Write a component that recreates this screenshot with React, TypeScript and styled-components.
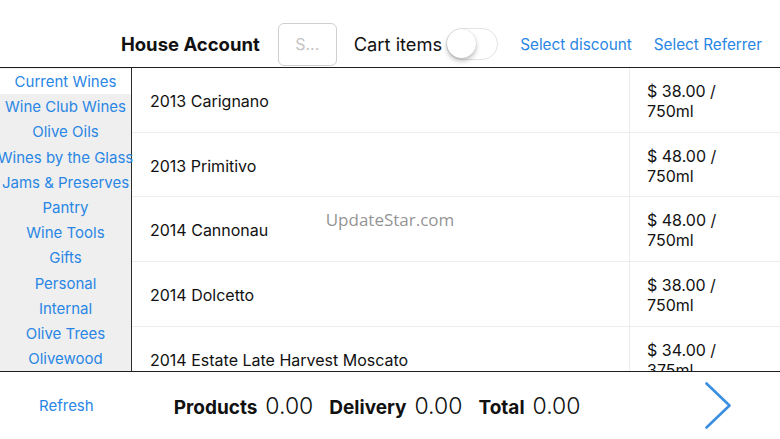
import React from 'react'
import styled, { createGlobalStyle } from 'styled-components'

const GlobalStyle = createGlobalStyle`
  html, body {
    margin: 0;
    padding: 0;
    background: #fff;
    font-family: Inter, 'Liberation Sans', Arial, sans-serif;
    color: #111;
  }
`

const BLUE = '#2a86e4'

const Screen = styled.div`
  position: relative;
  width: 780px;
  height: 439px;
  display: flex;
  flex-direction: column;
  overflow: hidden;
`

const Header = styled.header`
  height: 68px;
  box-sizing: border-box;
  border-bottom: 1px solid #1e1e1e;
  display: flex;
  align-items: center;
  justify-content: flex-end;
  padding: 21px 18px 0 0;
  flex-shrink: 0;
`

const AccountName = styled.div`
  font-size: 18.5px;
  font-weight: 700;
  margin-right: 18px;
`

const SearchBox = styled.div`
  width: 59px;
  height: 43px;
  box-sizing: border-box;
  border: 1px solid #cfcfcf;
  border-radius: 6px;
  display: flex;
  align-items: center;
  justify-content: center;
  color: #c4c4c4;
  font-size: 16px;
  margin-right: 17px;
`

const CartLabel = styled.div`
  font-size: 18.3px;
  margin-right: 4px;
`

const Toggle = styled.div`
  position: relative;
  width: 52px;
  height: 32px;
  box-sizing: border-box;
  border: 1.5px solid #e4e4e4;
  border-radius: 16px;
  background: #fff;
  margin-right: 22px;
`

const Knob = styled.div`
  position: absolute;
  left: 0;
  top: 0;
  width: 29px;
  height: 29px;
  border-radius: 50%;
  background: #fff;
  box-shadow: 0 3px 5px rgba(0, 0, 0, 0.25), 0 0 1px rgba(0, 0, 0, 0.2);
`

const LinkButton = styled.div<{ $gap?: number }>`
  color: ${BLUE};
  font-size: 15.3px;
  margin-right: ${p => p.$gap ?? 0}px;
`

const Main = styled.div`
  display: flex;
  height: 304px;
  border-bottom: 1px solid #1e1e1e;
  box-sizing: border-box;
  flex-shrink: 0;
  overflow: hidden;
`

const Sidebar = styled.nav`
  position: relative;
  z-index: 1;
  width: 132px;
  box-sizing: border-box;
  border-right: 1px solid #2a2a2a;
  background: #efefef;
  flex-shrink: 0;
  padding-top: 1px;
`

const Category = styled.div<{ $active?: boolean }>`
  height: 25.2px;
  line-height: 25.2px;
  white-space: nowrap;
  font-size: 15px;
  color: ${BLUE};
  background: ${p => (p.$active ? '#fff' : 'transparent')};
  display: flex;
  justify-content: center;
`

const Table = styled.div`
  flex: 1;
  display: flex;
  flex-direction: column;
`

const Row = styled.div`
  height: 64.7px;
  flex-shrink: 0;
  display: grid;
  grid-template-columns: 497px 1fr;
  border-bottom: 1px solid #ececec;
  box-sizing: border-box;
`

const NameCell = styled.div`
  display: flex;
  align-items: center;
  padding: 2px 0 0 18px;
  font-size: 16px;
`

const PriceCell = styled.div`
  border-left: 1px solid #ececec;
  display: flex;
  flex-direction: column;
  justify-content: center;
  padding: 2px 0 0 17px;
  font-size: 16px;
  line-height: 20px;
`

const Footer = styled.footer`
  flex: 1;
  display: flex;
  align-items: center;
  padding: 0 48px 0 39px;
`

const Refresh = styled.div`
  color: ${BLUE};
  font-size: 15px;
  margin-right: 80px;
`

const Summary = styled.div`
  display: flex;
  align-items: baseline;
  margin-right: 16px;
`

const SummaryLabel = styled.span`
  font-size: 19px;
  font-weight: 700;
  margin-right: 8px;
`

const SummaryValue = styled.span`
  font-weight: 300;
  font-size: 23px;
`

const NextButton = styled.div`
  margin-left: auto;
  display: flex;
`

const Watermark = styled.div`
  position: absolute;
  left: 0;
  right: 0;
  top: 208px;
  text-align: center;
  font-family: 'Open Sans', sans-serif;
  font-size: 17px;
  color: rgba(110, 110, 110, 0.75);
  pointer-events: none;
  z-index: 2;
`

const categories = [
  'Current Wines',
  'Wine Club Wines',
  'Olive Oils',
  'Wines by the Glass',
  'Jams & Preserves',
  'Pantry',
  'Wine Tools',
  'Gifts',
  'Personal',
  'Internal',
  'Olive Trees',
  'Olivewood',
]

const products = [
  { name: '2013 Carignano', price: '$ 38.00 /', size: '750ml' },
  { name: '2013 Primitivo', price: '$ 48.00 /', size: '750ml' },
  { name: '2014 Cannonau', price: '$ 48.00 /', size: '750ml' },
  { name: '2014 Dolcetto', price: '$ 38.00 /', size: '750ml' },
  { name: '2014 Estate Late Harvest Moscato', price: '$ 34.00 /', size: '375ml' },
]

export default function App() {
  return (
    <Screen>
      <GlobalStyle />
      <Header>
        <AccountName>House Account</AccountName>
        <SearchBox>S...</SearchBox>
        <CartLabel>Cart items</CartLabel>
        <Toggle>
          <Knob />
        </Toggle>
        <LinkButton $gap={22}>Select discount</LinkButton>
        <LinkButton>Select Referrer</LinkButton>
      </Header>
      <Main>
        <Sidebar>
          {categories.map((c, i) => (
            <Category key={c} $active={i === 0}>
              {c}
            </Category>
          ))}
        </Sidebar>
        <Table>
          {products.map(p => (
            <Row key={p.name}>
              <NameCell>{p.name}</NameCell>
              <PriceCell>
                <span>{p.price}</span>
                <span>{p.size}</span>
              </PriceCell>
            </Row>
          ))}
        </Table>
      </Main>
      <Footer>
        <Refresh>Refresh</Refresh>
        <Summary>
          <SummaryLabel>Products</SummaryLabel>
          <SummaryValue>0.00</SummaryValue>
        </Summary>
        <Summary>
          <SummaryLabel>Delivery</SummaryLabel>
          <SummaryValue>0.00</SummaryValue>
        </Summary>
        <Summary>
          <SummaryLabel>Total</SummaryLabel>
          <SummaryValue>0.00</SummaryValue>
        </Summary>
        <NextButton>
          <svg width="27" height="47" viewBox="0 0 27 47">
            <polyline
              points="1.5,1.5 24.5,23.5 1.5,45.5"
              fill="none"
              stroke="#3a8fe0"
              strokeWidth="2.6"
              strokeLinecap="round"
              strokeLinejoin="round"
            />
          </svg>
        </NextButton>
      </Footer>
      <Watermark>UpdateStar.com</Watermark>
    </Screen>
  )
}
